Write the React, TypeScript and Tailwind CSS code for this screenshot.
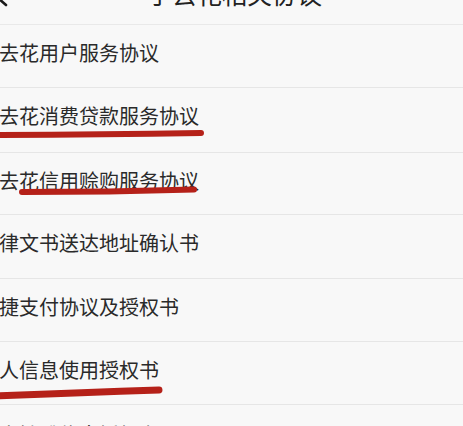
import React from "react";

const rows: { text: string; h: string; pt: string }[] = [
  { text: "去花用户服务协议", h: "h-[63px]", pt: "pt-[18px]" },
  { text: "去花消费贷款服务协议", h: "h-[65px]", pt: "pt-[18px]" },
  { text: "去花信用赊购服务协议", h: "h-[62px]", pt: "pt-[18px]" },
  { text: "律文书送达地址确认书", h: "h-[64px]", pt: "pt-[18px]" },
  { text: "捷支付协议及授权书", h: "h-[63px]", pt: "pt-[18px]" },
  { text: "人信息使用授权书", h: "h-[63px]", pt: "pt-[18px]" },
  { text: "户敏感信息授权书", h: "h-[63px]", pt: "pt-[20px]" },
];

export default function App() {
  return (
    <div
      className="relative w-[463px] h-[426px] overflow-hidden bg-[#f8f8f8] text-[#2a2a2a]"
      style={{ fontFamily: '"Noto Sans CJK SC", "Noto Sans", sans-serif' }}
    >
      <div className="h-[25px] border-b border-[#e9e9e9] flex items-end justify-center overflow-hidden pb-[18px] pl-[6px]">
        <span className="text-[25px] leading-none whitespace-nowrap text-[#222222]">于去花相关协议</span>
      </div>
      {rows.map((r, i) => (
        <div key={i} className={`${r.h} border-b border-[#e6e6e6] ${r.pt}`}>
          <span className="block text-[20px] leading-[20px] whitespace-nowrap -ml-[1px]">{r.text}</span>
        </div>
      ))}
      <svg className="absolute top-0 left-0" width="12" height="10" viewBox="0 0 12 10">
        <path d="M -2 -2 L 6 5" stroke="#1a1a1a" strokeWidth="2.6" strokeLinecap="round" fill="none" />
      </svg>
      <svg className="absolute top-0 left-0 pointer-events-none" width="463" height="426" viewBox="0 0 463 426">
        <path d="M -6 135 Q 100 134.5 201 133" stroke="#b52119" strokeWidth="6" strokeLinecap="round" fill="none" />
        <path d="M 22 192 Q 110 192 194 189.5" stroke="#b52119" strokeWidth="6" strokeLinecap="round" fill="none" />
        <path d="M -6 396 Q 80 392.5 159 390" stroke="#b52119" strokeWidth="7" strokeLinecap="round" fill="none" />
      </svg>
    </div>
  );
}
